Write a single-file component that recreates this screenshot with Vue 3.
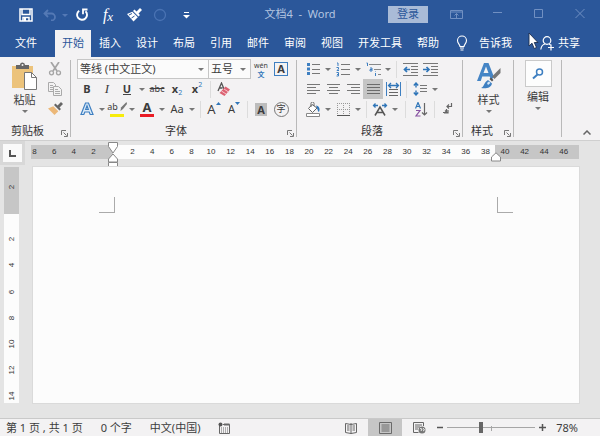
<script setup>
import { ref } from 'vue'

const tabs = ['开始', '插入', '设计', '布局', '引用', '邮件', '审阅', '视图', '开发工具', '帮助']
const active = ref('开始')
const zoomPos = ref(38)

const across = []
for (let n = -8; n <= 46; n += 2) if (n !== 0) across.push(n)
const down = [-2, 2, 4, 6, 8, 10, 12, 14]

const acrossPos = n => ((82 + n * 9.8) / 548) * 100 + '%'
const downPos = n => ((46 + n * 13.1) / 236) * 100 + '%'
</script>

<template>
  <div class="app">
    <header class="title-bar">
      <div class="quick">
        <button class="qb" aria-label="保存">
          <svg width="14" height="14" viewBox="0 0 14 14"><path d="M1 1h12v12H1zM3 1.500v5h8v-5M4 13V9.500h6V13" fill="none" stroke="#fff" stroke-width="1.500" /><path d="M5 10h2v3H5z" fill="#fff" /></svg>
        </button>
        <button class="qb undo" aria-label="撤消">
          <svg width="14" height="12" viewBox="0 0 14 12"><path d="M5 1L1.500 4.500 5 8M2 4.500h6.500a3.500 3.500 0 0 1 0 7H8" fill="none" stroke="#5479b5" stroke-width="1.800" /></svg>
        </button>
        <button class="qb slim" aria-label="撤消列表"><i class="caret dim"></i></button>
        <button class="qb" aria-label="重复">
          <svg width="14" height="14" viewBox="0 0 14 14"><path d="M4.200 2.700A5 5 0 1 0 10.500 3.200" fill="none" stroke="#fff" stroke-width="1.900" /><path d="M12.500 1.500H8v4.800" fill="none" stroke="#fff" stroke-width="1.800" /></svg>
        </button>
        <button class="qb fx" aria-label="公式">f<sub>x</sub></button>
        <button class="qb" aria-label="格式刷">
          <svg width="15" height="14" viewBox="0 0 15 14"><path d="M13 0l2 2-3.500 3.500L13 7l-1.500 1.500L6 3l1.500-1.500L9.500 3.500z" fill="#fff" /><path d="M5.300 3.700l5.500 5.500L6.500 13.500 0 6z" fill="#fff" /><path d="M2 7l3-1.500M4.500 10l3-2" stroke="#2b579a" /></svg>
        </button>
        <button class="qb" aria-label="录制">
          <svg width="14" height="14" viewBox="0 0 14 14"><circle cx="7" cy="7" r="5.500" fill="none" stroke="#4a73b3" stroke-width="1.300" /></svg>
        </button>
        <button class="qb" aria-label="自定义">
          <svg width="7" height="7" viewBox="0 0 7 7"><path d="M1 .5h5" stroke="#fff" /><path d="M0 3h7L3.500 6.500z" fill="#fff" /></svg>
        </button>
      </div>
      <div class="doc-title">文档4&nbsp; -&nbsp; Word</div>
      <div class="window">
        <button class="login">登录</button>
        <button class="wb" aria-label="功能区选项"><svg width="13" height="11" viewBox="0 0 13 11"><path d="M.5 1.500h12v8H.5zM.5 3h12M6.500 9V4.500M4.500 6.500l2-2 2 2" fill="none" stroke="#7190c2" /></svg></button>
        <button class="wb" aria-label="最小化"><svg width="10" height="10" viewBox="0 0 10 10"><path d="M0 3.500h9" stroke="#7190c2" /></svg></button>
        <button class="wb" aria-label="最大化"><svg width="10" height="10" viewBox="0 0 10 10"><path d="M.5.500h8v8h-8z" fill="none" stroke="#7190c2" /></svg></button>
        <button class="wb" aria-label="关闭"><svg width="10" height="10" viewBox="0 0 10 10"><path d="M.5 0l9 9M9.500 0l-9 9" fill="none" stroke="#7190c2" /></svg></button>
      </div>
    </header>

    <nav class="tabs">
      <button class="tab file">文件</button>
      <button v-for="t in tabs" :key="t" class="tab" :class="{ on: t === active }" @click="active = t">{{ t }}</button>
      <button class="tell">
        <svg width="12" height="16" viewBox="0 0 12 16"><path d="M4 11.500C4 9.500 1.500 8.500 1.500 5.500a4.500 4.500 0 0 1 9 0c0 3-2.500 4-2.500 6zM4 13h4M4.500 15h3" fill="none" stroke="#fff" stroke-width="1.100" /></svg>
        告诉我
      </button>
      <button class="share">
        <svg width="14" height="15" viewBox="0 0 14 15"><circle cx="7" cy="4.500" r="3.800" fill="none" stroke="#fff" stroke-width="1.200" /><path d="M.8 13.500c.4-3 2-5 4.200-5.500M9 8l2 1.200M8 11.500h6M11 8.500v6" fill="none" stroke="#fff" stroke-width="1.200" /></svg>
        共享
      </button>
      <svg class="pointer" width="11" height="18" viewBox="0 0 11 18"><path d="M1 1v13l3-2.800L6.200 16.500l2.300-1L6.300 10.500H10z" fill="#fff" stroke="#1c2d4d" stroke-width=".9" /></svg>
    </nav>

    <div class="ribbon">
      <section class="group clip">
        <div class="body">
          <button class="big">
            <svg width="27" height="28" viewBox="0 0 27 28"><path d="M1 4h21v22H1z" fill="#ecc37b" /><path d="M5 3h4a2.500 2.500 0 0 1 5 0h4v4H5z" fill="#666" /><circle cx="11.500" cy="3" r="1" fill="#f3f3f3" /><path d="M13.500 10.500h7l5 5v12h-12z" fill="#fff" stroke="#777" /><path d="M20.500 10.500v5h5" fill="none" stroke="#777" /></svg>
            <span>粘贴</span><i class="caret"></i>
          </button>
          <div class="stack">
            <button class="ib" aria-label="剪切"><svg width="14" height="14" viewBox="0 0 14 14"><path d="M3 0l6 9M11 0L5 9" stroke="#a4a4a4" stroke-width="1.700" /><circle cx="3.500" cy="10.800" r="2" fill="none" stroke="#a4a4a4" stroke-width="1.300" /><circle cx="10.500" cy="10.800" r="2" fill="none" stroke="#a4a4a4" stroke-width="1.300" /></svg></button>
            <button class="ib" aria-label="复制"><svg width="14" height="14" viewBox="0 0 14 14"><path d="M.5.5h5l2 2v7h-7zM2 3.500h3M2 5.500h3M2 7.500h3" fill="none" stroke="#aaa" /><path d="M5.500 4.500h5l3 3v6h-8z" fill="#f3f3f3" stroke="#aaa" /><path d="M7 7.500h3M7 9.500h5M7 11.500h5" stroke="#aaa" /></svg></button>
            <button class="ib" aria-label="格式刷"><svg width="15" height="14" viewBox="0 0 15 14"><path d="M13 0l2 2-3.500 3.500L13 7l-1.500 1.500L6 3l1.500-1.500L9.500 3.500z" fill="#666" /><path d="M5.300 4.200l5 5L6.500 13 0 6.500z" fill="#ecb878" /></svg></button>
          </div>
        </div>
        <footer><span>剪贴板</span><button class="launch" aria-label="剪贴板选项"><svg width="7" height="7" viewBox="0 0 7 7"><path d="M.5 5V.5H5M2.500 2.500l3 3M6.500 3v3.500H3" fill="none" stroke="#777" /></svg></button></footer>
      </section>

      <section class="group font">
        <div class="row first">
          <label class="combo wide"><select aria-label="字体名称"><option>等线 (中文正文)</option></select><i class="caret"></i></label>
          <label class="combo"><select aria-label="字号"><option>五号</option></select><i class="caret"></i></label>
          <button class="ib pinyin" aria-label="拼音指南"><span>wén</span><b>文</b></button>
          <button class="ib" aria-label="字符边框"><span class="boxed">A</span></button>
        </div>
        <div class="row">
          <button class="ib"><b>B</b></button>
          <button class="ib serif"><i>I</i></button>
          <button class="ib u"><b>U</b></button>
          <button class="cb" aria-label="下划线选项"><i class="caret"></i></button>
          <button class="ib abc">abc</button>
          <button class="ib"><b>x</b><small class="lo">2</small></button>
          <button class="ib"><b>x</b><small class="hi">2</small></button>
          <i class="sep"></i>
          <button class="ib" aria-label="清除格式"><svg width="14" height="15" viewBox="0 0 14 15"><path d="M1 9L4.500 1 7 7M2.500 6h3" fill="none" stroke="#555" stroke-width="1.300" /><path d="M8.500 4.500l4.500 3-5.500 6.500L2.500 11z" fill="#dc6272" /><path d="M4.500 9l4.500 3M7 7l4.500 3" stroke="#f6c8cd" /></svg></button>
        </div>
        <div class="row">
          <button class="ib" aria-label="文本效果"><svg width="14" height="14" viewBox="0 0 14 14"><path d="M1 12.500L5.500 1h3L13 12.500h-2.800L9.200 10H4.800l-1 2.500zM5.700 7.500h2.600L7 3.800z" fill="#dcebf8" stroke="#3e7fc1" stroke-width="1.200" /></svg></button>
          <button class="cb" aria-label="文本效果选项"><i class="caret"></i></button>
          <button class="ib hl" aria-label="突出显示"><span>ab</span><svg width="9" height="10" viewBox="0 0 9 10"><path d="M8.500 0L3 5.500 2.500 9 5 7l4-5" fill="#777" /></svg></button>
          <button class="cb" aria-label="突出显示选项"><i class="caret"></i></button>
          <button class="ib fc" aria-label="字体颜色"><b>A</b></button>
          <button class="cb" aria-label="字体颜色选项"><i class="caret"></i></button>
          <button class="ib">Aa</button>
          <button class="cb" aria-label="大小写选项"><i class="caret"></i></button>
          <i class="sep"></i>
          <button class="ib grow" aria-label="增大字号"><span>A</span><svg class="top" width="5" height="3" viewBox="0 0 5 3"><path d="M0 3h5L2.500 0z" fill="#2f75b8" /></svg></button>
          <button class="ib" aria-label="减小字号"><span>A</span><svg class="top" width="5" height="3" viewBox="0 0 5 3"><path d="M0 0h5L2.500 3z" fill="#2f75b8" /></svg></button>
          <i class="sep"></i>
          <button class="ib" aria-label="字符底纹"><span class="shaded">A</span></button>
          <button class="ib" aria-label="带圈字符"><span class="ringed">字</span></button>
        </div>
        <footer><span>字体</span><button class="launch" aria-label="字体选项"><svg width="7" height="7" viewBox="0 0 7 7"><path d="M.5 5V.5H5M2.500 2.500l3 3M6.500 3v3.500H3" fill="none" stroke="#777" /></svg></button></footer>
      </section>

      <section class="group para">
        <div class="row">
          <button class="ib" aria-label="项目符号"><svg width="13" height="14" viewBox="0 0 13 14"><path d="M0 1h3v3H0zM0 5.500h3v3H0zM0 10h3v3H0z" fill="#3e7fc1" /><path d="M5 2.500h8M5 7.500h8M5 11.500h8" stroke="#777" /></svg></button>
          <button class="cb" aria-label="项目符号选项"><i class="caret"></i></button>
          <button class="ib" aria-label="编号"><svg width="14" height="15" viewBox="0 0 14 15"><path d="M1 1h1v3M.5 5.500h2v1.500L1 8.500h2M.5 10.500h2v3.500h-2M1 12.500h1" fill="none" stroke="#3e7fc1" /><path d="M5 2.500h9M5 7.500h9M5 12.500h9" stroke="#777" /></svg></button>
          <button class="cb" aria-label="编号选项"><i class="caret"></i></button>
          <button class="ib" aria-label="多级列表"><svg width="15" height="15" viewBox="0 0 15 15"><path d="M.5 1h1v3M4 6h2v3H4V7.500h2M9.500 11v3M9.500 9.500v.5" fill="none" stroke="#3e7fc1" /><path d="M3 2.500h12M8 7.500h7M12 12.500h3" stroke="#888" /></svg></button>
          <button class="cb" aria-label="多级列表选项"><i class="caret"></i></button>
          <i class="sep"></i>
          <button class="ib" aria-label="减少缩进"><svg width="15" height="13" viewBox="0 0 15 13"><path d="M0 .5h15M8 3.500h7M8 6.500h7M8 9.500h7M0 12.500h15" stroke="#777" /><path d="M7 6.500H2M4 4L1.500 6.500 4 9" fill="none" stroke="#2f75b8" stroke-width="1.700" /></svg></button>
          <button class="ib" aria-label="增加缩进"><svg width="15" height="13" viewBox="0 0 15 13"><path d="M0 .5h15M8 3.500h7M8 6.500h7M8 9.500h7M0 12.500h15" stroke="#777" /><path d="M0 6.500h5M3.500 4L6 6.500 3.500 9" fill="none" stroke="#2f75b8" stroke-width="1.700" /></svg></button>
        </div>
        <div class="row">
          <button class="ib" aria-label="左对齐"><svg width="13" height="10" viewBox="0 0 13 10"><path d="M0 .5h13M0 3.500h9M0 6.500h13M0 9.500h9" stroke="#777" /></svg></button>
          <button class="ib" aria-label="居中"><svg width="13" height="10" viewBox="0 0 13 10"><path d="M0 .5h13M2 3.500h9M0 6.500h13M2 9.500h9" stroke="#777" /></svg></button>
          <button class="ib" aria-label="右对齐"><svg width="13" height="10" viewBox="0 0 13 10"><path d="M0 .5h13M4 3.500h9M0 6.500h13M4 9.500h9" stroke="#777" /></svg></button>
          <button class="ib on" aria-label="两端对齐"><svg width="13" height="10" viewBox="0 0 13 10"><path d="M0 .5h13M0 3.500h13M0 6.500h13M0 9.500h13" stroke="#6c6c6c" /></svg></button>
          <button class="ib" aria-label="分散对齐"><svg width="15" height="14" viewBox="0 0 15 14"><path d="M.5 0v14M14.500 0v14" stroke="#3e7fc1" /><path d="M3 3.500h9M5 1L2.500 3.500 5 6M10 1l2.500 2.500L10 6" fill="none" stroke="#2f75b8" stroke-width="1.300" /><path d="M3 7.500h9M3 10.500h9M3 13.500h9" stroke="#666" /></svg></button>
          <i class="sep"></i>
          <button class="ib" aria-label="行距"><svg width="14" height="14" viewBox="0 0 14 14"><path d="M3 1v4.500M3 8.500V13M.8 3.500L3 1l2.200 2.500M.8 10.500L3 13l2.200-2.500" fill="none" stroke="#2f75b8" stroke-width="1.400" /><path d="M7 3.500h7M7 6.500h7M7 9.500h7" stroke="#777" /></svg></button>
          <button class="cb" aria-label="行距选项"><i class="caret"></i></button>
        </div>
        <div class="row">
          <button class="ib" aria-label="底纹"><svg width="15" height="15" viewBox="0 0 15 15"><path d="M6 2.500L11 6 6.500 10.500 2.500 6.500zM5 5V1.500a1.500 1.500 0 0 1 3 0V4" fill="#fff" stroke="#666" /><path d="M10 3.500c3 .5 4.500 3 3 6.500-1-.5-1.500-2.500-2-4z" fill="#2f75b8" /><path d="M.5 11.500h13v3H.5z" fill="#fff" stroke="#888" /></svg></button>
          <button class="cb" aria-label="底纹选项"><i class="caret"></i></button>
          <button class="ib" aria-label="边框"><svg width="13" height="13" viewBox="0 0 13 13"><path d="M.5 0v12M6.500 0v12M12.500 0v12M0 .5h13M0 6.500h13" stroke="#999" stroke-dasharray="1 1" /><path d="M0 12.500h13" stroke="#555" /></svg></button>
          <button class="cb" aria-label="边框选项"><i class="caret"></i></button>
          <i class="sep"></i>
          <button class="ib" aria-label="中文版式"><svg width="16" height="13" viewBox="0 0 16 13"><path d="M3 12.500L8 4l5 8.500M5 9.500h6" fill="none" stroke="#555" stroke-width="1.500" /><path d="M6 2.500H1.500M3.500.5L1.500 2.500l2 2M10 2.500h4.500M12.500.5l2 2-2 2" fill="none" stroke="#2f75b8" stroke-width="1.300" /></svg></button>
          <button class="cb" aria-label="中文版式选项"><i class="caret"></i></button>
          <i class="sep loose"></i>
          <button class="ib" aria-label="排序"><svg width="13" height="15" viewBox="0 0 13 15"><path d="M.5 6.500L3 .5l2.500 6M1.500 4.500h3" fill="none" stroke="#2f75b8" stroke-width="1.200" /><path d="M1 8.500h4L1 14h4.500" fill="none" stroke="#8752a1" stroke-width="1.200" /><path d="M9.500 1v12M7 10.500L9.500 13l2.500-2.500" fill="none" stroke="#666" stroke-width="1.200" /></svg></button>
          <i class="sep"></i>
          <button class="ib" aria-label="显示标记"><svg width="10" height="12" viewBox="0 0 10 12"><path d="M8.500 0v3.500H4M6 1.500l-2 2 2 2M3.500 6v3.500H0M2 7.500L4.500 10M5 7v3H1" fill="none" stroke="#666" stroke-width="1.200" /></svg></button>
        </div>
        <footer><span>段落</span><button class="launch" aria-label="段落选项"><svg width="7" height="7" viewBox="0 0 7 7"><path d="M.5 5V.5H5M2.500 2.500l3 3M6.500 3v3.500H3" fill="none" stroke="#777" /></svg></button></footer>
      </section>

      <section class="group styles">
        <div class="body">
          <button class="big">
            <svg width="26" height="28" viewBox="0 0 26 28"><path d="M1 19L8 1h4.500l5.500 14-3 3-1.300-3.500H6.200L4.800 19zM7.500 11h5L10 4.500z" fill="#4585c5" /><path d="M24.500 6v5l-6 6-2.500-2.500z" fill="#777" /><path d="M15 15.500l2.500 2.500-1.500 1.500-2.500-2.500z" fill="#555" /><path d="M5 26c3-.5 3-6 7-8l4 3.500C15 26 10 27 5 26z" fill="#3e7fc1" /><path d="M11 21l2-1.500 1.500 1.500-2.500 2z" fill="#d4e6f7" /></svg>
            <span>样式</span><i class="caret"></i>
          </button>
        </div>
        <footer><span>样式</span><button class="launch" aria-label="样式选项"><svg width="7" height="7" viewBox="0 0 7 7"><path d="M.5 5V.5H5M2.500 2.500l3 3M6.500 3v3.500H3" fill="none" stroke="#777" /></svg></button></footer>
      </section>

      <section class="group edit">
        <div class="body">
          <button class="big">
            <em class="tile"><svg width="12" height="12" viewBox="0 0 12 12"><circle cx="7.500" cy="4" r="3" fill="none" stroke="#3e7fc1" stroke-width="1.500" /><path d="M5.500 6.500L1 10.500" stroke="#3e7fc1" stroke-width="2" /></svg></em>
            <span>编辑</span><i class="caret"></i>
          </button>
        </div>
      </section>
      <button class="collapse" aria-label="折叠功能区"><svg width="8" height="5" viewBox="0 0 8 5"><path d="M.5 4.500L4 1l3.500 3.500" fill="none" stroke="#666" stroke-width="1.500" /></svg></button>
    </div>

    <main class="work">
      <div class="side">
        <button class="corner" aria-label="制表符"><svg width="8" height="7" viewBox="0 0 8 7"><path d="M1 0v6h6" fill="none" stroke="#555" stroke-width="2" /></svg></button>
        <div class="vruler">
          <div class="vmargin"></div>
          <span v-for="n in down" :key="n" :style="{ top: downPos(n) }">{{ Math.abs(n) }}</span>
        </div>
      </div>
      <div class="sheet">
        <div class="hruler">
          <div class="m left"></div><div class="m mid"></div><div class="m right"></div>
          <span v-for="n in across" :key="n" :style="{ left: acrossPos(n) }">{{ Math.abs(n) }}</span>
          <svg class="indent" :style="{ left: acrossPos(0) }" width="11" height="26" viewBox="0 0 11 26"><path d="M1 .5h9v4L5.500 11 1 4.500zM5.500 12L10 17v3H1v-3zM1 20.500h9v4H1z" fill="#fff" stroke="#888" /></svg>
          <svg class="indent end" :style="{ left: acrossPos(39.1) }" width="11" height="10" viewBox="0 0 11 10"><path d="M5.500.8L10 5v4H1V5z" fill="#fff" stroke="#888" /></svg>
        </div>
        <div class="page">
          <i class="crop l"></i><i class="crop r"></i>
        </div>
      </div>
    </main>

    <footer class="status">
      <span>第 1 页 , 共 1 页</span>
      <span>0 个字</span>
      <span>中文(中国)</span>
      <svg width="12" height="12" viewBox="0 0 12 12"><path d="M1.500 3v8.500h10V2.500H5" fill="none" stroke="#666" /><circle cx="2.500" cy="2.500" r="2" fill="#555" /><path d="M6 1.500h5.500v2H6z" fill="#666" /><path d="M3 6h7M3 8h7M3 10h7" stroke="#666" stroke-dasharray="1 1" /></svg>
      <div class="views">
        <button aria-label="阅读视图"><svg width="12" height="12" viewBox="0 0 12 12"><path d="M.5 1.500L6 2.500l5.500-1v9L6 11.500.5 10.500zM6 1v11M2 4h2.500M2 6h2.500M2 8h2.500M7.500 4H10M7.500 6H10M7.500 8H10" fill="none" stroke="#666" /></svg></button>
        <button class="on" aria-label="页面视图"><svg width="13" height="12" viewBox="0 0 13 12"><path d="M.5.5h12v11H.5zM2.500 3h8M2.500 5h8M2.500 7h8M2.500 9h8" fill="none" stroke="#6a6a6a" /></svg></button>
        <button aria-label="Web 视图"><svg width="13" height="12" viewBox="0 0 13 12"><path d="M5.500 10.500h-5V.5h10V4M2 3h7M2 5h5M2 7h3" fill="none" stroke="#666" /><circle cx="9" cy="8" r="3.500" fill="#777" /><path d="M7 6.500l2 .5-1 2M10 6l1.500 2-1.500 1" fill="none" stroke="#eee" /></svg></button>
      </div>
      <div class="zoom">
        <button aria-label="缩小"><svg width="7" height="7" viewBox="0 0 7 7"><path d="M1 3.500h6" stroke="#555" stroke-width="1.500" /></svg></button>
        <div class="track"><i class="notch"></i><input v-model="zoomPos" type="range" min="0" max="100" aria-label="显示比例" /></div>
        <button aria-label="放大"><svg width="7" height="7" viewBox="0 0 7 7"><path d="M0 3.500h7M3.500 0v7" stroke="#555" stroke-width="1.500" /></svg></button>
        <button class="pct">78%</button>
      </div>
    </footer>
  </div>
</template>

<style>
body {
  background: #e4e4e4;
}
</style>

<style scoped>
.app {
  display: flex;
  flex-direction: column;
  min-height: 100vh;
  font: 11px/14px "Noto Sans", "Noto Sans CJK SC", sans-serif;
  color: #3c3c3c;
  background: #e4e4e4;
}
button,
select {
  font: inherit;
  color: inherit;
  background: none;
  border: 0;
  border-radius: 0;
  margin: 0;
  padding: 0;
}
svg {
  display: block;
  flex: none;
}
.caret {
  flex: none;
  width: 0;
  height: 0;
  border: 3px solid transparent;
  border-top-color: #777;
  border-bottom: 0;
}
.caret.dim {
  border-top-color: #5479b5;
}

/* title bar */
.title-bar {
  display: grid;
  grid-template-columns: 1fr auto 1fr;
  align-items: center;
  height: 30px;
  background: #2b579a;
}
.quick {
  display: flex;
  padding-left: 13px;
}
.qb {
  display: flex;
  align-items: center;
  justify-content: center;
  width: 26px;
  height: 30px;
  color: #fff;
}
.undo {
  width: 22px;
}
.slim {
  width: 8px;
}
.fx {
  font: italic 16px/20px "Liberation Serif", serif;
}
.fx sub {
  font-size: 13px;
  line-height: 12px;
  align-self: center;
  padding-top: 4px;
}
.doc-title {
  color: #b4c5e0;
  white-space: nowrap;
  padding-bottom: 2px;
}
.window {
  display: flex;
  align-items: center;
  justify-content: flex-end;
  padding-bottom: 2px;
}
.login {
  width: 40px;
  height: 17px;
  margin-right: 8px;
  background: #a9bbd7;
  color: #2b579a;
  line-height: 16px;
}
.wb {
  display: flex;
  align-items: center;
  justify-content: center;
  width: 41px;
  height: 26px;
}

/* tabs */
.tabs {
  position: relative;
  display: flex;
  gap: 1px;
  height: 27px;
  padding: 0 20px 0 8px;
  background: #2b579a;
  color: #fff;
}
.tab {
  padding: 0 7px 2px;
  white-space: nowrap;
}
.file {
  margin-right: 10px;
}
.tab.on {
  background: #f3f2f3;
  color: #2b579a;
}
.tell,
.share {
  display: flex;
  align-items: center;
  white-space: nowrap;
  padding-bottom: 1px;
}
.tell {
  gap: 11px;
  margin-left: 9px;
}
.share {
  gap: 4px;
  margin-left: auto;
}
.pointer {
  position: absolute;
  right: 61px;
  top: 2px;
}

/* ribbon */
.ribbon {
  display: flex;
  background: #f3f2f3;
  border-bottom: 1px solid #cfcfcf;
  height: 84px;
  box-sizing: border-box;
}
.group {
  position: relative;
  display: flex;
  flex-direction: column;
  flex: none;
  box-sizing: border-box;
  padding: 2px 6px 1px;
}
.group::after {
  content: "";
  position: absolute;
  right: 0;
  top: 3px;
  bottom: 3px;
  width: 1px;
  background: #b9b9b9;
}
.clip {
  width: 71px;
}
.font {
  width: 226px;
}
.para {
  width: 166px;
}
.styles {
  width: 51px;
}
.edit {
  width: 48px;
}
.body {
  display: flex;
  height: 60px;
}
.clip .body {
  gap: 2px;
}
.big {
  display: flex;
  flex-direction: column;
  align-items: center;
  flex: 1;
  gap: 4px;
  padding-top: 3px;
  line-height: 12px;
}
.edit .big {
  padding-top: 1px;
}
.tile {
  display: grid;
  place-items: center;
  box-sizing: border-box;
  width: 27px;
  height: 27px;
  background: #fdfdfd;
  border: 1px solid #cacaca;
}
.group footer {
  display: flex;
  align-items: center;
  justify-content: center;
  position: relative;
  margin-top: auto;
  padding-right: 16px;
  color: #333;
  height: 16px;
}
.styles footer {
  justify-content: flex-start;
  padding: 0 0 0 2px;
}
.launch {
  position: absolute;
  right: -3px;
  bottom: 2px;
}
.row {
  display: flex;
  align-items: center;
  height: 20px;
}
.ib,
.cb {
  position: relative;
  display: flex;
  align-items: center;
  justify-content: center;
  width: 20px;
  height: 20px;
  flex: none;
}
.cb {
  width: 10px;
}
.ib.on {
  background: #c5c5c5;
}
.sep {
  flex: none;
  width: 1px;
  height: 17px;
  margin: 0 3px;
  background: #dcdcdc;
}
.sep.loose {
  margin: 0 5px;
}
.combo {
  position: relative;
  display: flex;
  align-items: center;
  box-sizing: border-box;
  width: 42px;
  height: 20px;
  border: 1px solid #c6c6c6;
  border-left: 0;
  background: #fbfbfb;
  padding-right: 4px;
}
.combo.wide {
  width: 132px;
  border-left: 1px solid #c6c6c6;
}
.combo select {
  appearance: none;
  flex: 1;
  min-width: 0;
  height: 18px;
  padding-left: 2px;
  outline: 0;
}
.pinyin {
  flex-direction: column;
  gap: 1px;
  font-size: 7px;
  line-height: 7px;
}
.pinyin span {
  line-height: 9px;
}
.pinyin b {
  color: #2f75b8;
}
.boxed {
  box-sizing: border-box;
  width: 14px;
  height: 14px;
  border: 1px solid #3e7fc1;
  font-weight: bold;
  line-height: 12px;
  text-align: center;
}
.serif {
  font-family: "Liberation Serif", serif;
  font-size: 13px;
}
.u b {
  border-bottom: 1px solid #444;
  line-height: 11px;
}
.abc {
  text-decoration: line-through;
  font-size: 9px;
}
small {
  font-size: 7px;
  line-height: 8px;
  color: #2f75b8;
}
.lo {
  align-self: flex-end;
  padding-bottom: 2px;
}
.hi {
  align-self: flex-start;
  padding-top: 2px;
}
.hl,
.fc {
  padding-bottom: 4px;
  box-sizing: border-box;
}
.hl {
  font-size: 9px;
}
.fc,
.grow {
  font-size: 13px;
}
.hl::after,
.fc::after {
  content: "";
  position: absolute;
  left: 3px;
  right: 3px;
  bottom: 2px;
  height: 3px;
  background: #f7ec0a;
}
.fc::after {
  background: #ea1c24;
}
.top {
  align-self: flex-start;
  padding-top: 3px;
  overflow: visible;
}
.shaded {
  width: 12px;
  height: 13px;
  background: #bcbcbc;
  line-height: 13px;
  text-align: center;
  font-weight: bold;
}
.ringed {
  box-sizing: border-box;
  width: 15px;
  height: 15px;
  border: 1px solid #777;
  border-radius: 50%;
  font-size: 9px;
  line-height: 12px;
  text-align: center;
}
.collapse {
  align-self: flex-end;
  margin: 0 9px 5px auto;
}

/* work area */
.work {
  display: flex;
  flex: 1;
  gap: 7px;
  padding: 0 21px 15px 0;
}
.side {
  display: flex;
  flex-direction: column;
  width: 24px;
}
.corner {
  display: grid;
  place-items: center;
  box-sizing: border-box;
  width: 25px;
  height: 24px;
  background: #fafafa;
  border: 3px solid #d8d8d8;
}
.vruler {
  position: relative;
  flex: 1;
  width: 15px;
  margin: 2px 0 0 4px;
  background: #fcfcfc;
}
.vmargin {
  height: 20%;
  background: #c6c6c6;
}
.vruler span,
.hruler span {
  position: absolute;
  font: 8px/8px "Liberation Sans", "Noto Sans", sans-serif;
  color: #333;
}
.vruler span {
  left: 50%;
  transform: translate(-50%, -50%) rotate(-90deg);
}
.hruler span {
  top: 50%;
  transform: translate(-50%, -50%);
}
.sheet {
  display: flex;
  flex-direction: column;
  flex: 1;
}
.hruler {
  position: relative;
  display: flex;
  height: 14px;
  margin: 4px 0 8px;
}
.m {
  background: #c6c6c6;
}
.left {
  flex: 82;
}
.mid {
  flex: 382;
  background: #fcfcfc;
}
.right {
  flex: 84;
}
.indent {
  position: absolute;
  top: -3px;
  transform: translateX(-50%);
}
.indent.end {
  top: 7px;
}
.page {
  position: relative;
  flex: 1;
  margin-left: 2px;
  background: #fcfcfc;
  box-shadow: 0 0 0 1px #dadada;
}
.crop {
  position: absolute;
  top: 30px;
  width: 15px;
  height: 15px;
  border: 0 solid #aaa;
  border-bottom-width: 1px;
}
.l {
  left: 12%;
  border-right-width: 1px;
}
.r {
  right: 12%;
  border-left-width: 1px;
}

/* status bar */
.status {
  display: flex;
  align-items: center;
  height: 18px;
  box-sizing: border-box;
  border-top: 1px solid #c9c9c9;
  background: #f3f2f3;
  padding: 0 22px 0 6px;
  white-space: nowrap;
}
.status > span {
  margin-right: 18px;
}
.views {
  display: flex;
  margin-left: auto;
}
.views button {
  display: grid;
  place-items: center;
  width: 34px;
  height: 17px;
}
.views .on {
  background: #c6c6c6;
}
.zoom {
  display: flex;
  align-items: center;
  gap: 4px;
}
.track {
  position: relative;
  display: flex;
  width: 88px;
}
.track input {
  appearance: none;
  width: 100%;
  height: 12px;
  margin: 0;
  background: linear-gradient(#a6a6a6, #a6a6a6) center / 100% 1px no-repeat;
}
.track input::-webkit-slider-thumb {
  appearance: none;
  width: 4px;
  height: 11px;
  background: #666;
}
.notch {
  position: absolute;
  left: 50%;
  top: 4px;
  width: 1px;
  height: 5px;
  background: #a6a6a6;
}
.pct {
  margin-left: 6px;
}
</style>
